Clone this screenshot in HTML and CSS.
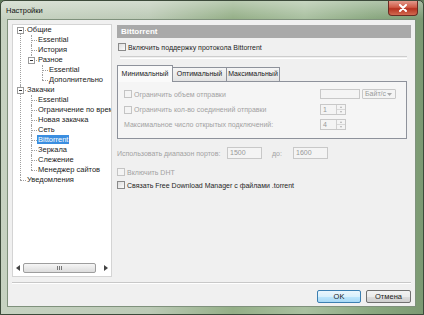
FILE: index.html
```html
<!DOCTYPE html>
<html lang="ru">
<head>
<meta charset="utf-8">
<title>Настройки</title>
<link rel="stylesheet" href="styles.css">
</head>
<body>
<div class="window">
  <div class="titlebar">
    <span class="title">Настройки</span>
    <span class="close"><svg width="10" height="8" viewBox="0 0 10 8"><path d="M2 1 L8 7 M8 1 L2 7" stroke="#fff" stroke-width="2" stroke-linecap="round"/></svg></span>
  </div>
  <div class="client">
    <div class="main">
      <div class="tree">
        <ul class="root">
          <li><span class="exp"></span>Общие
            <ul>
              <li>Essential</li>
              <li>История</li>
              <li><span class="exp"></span>Разное
                <ul>
                  <li>Essential</li>
                  <li>Дополнительно</li>
                </ul>
              </li>
            </ul>
          </li>
          <li><span class="exp"></span>Закачки
            <ul>
              <li>Essential</li>
              <li><span class="clip">Ограничение по времени</span></li>
              <li>Новая закачка</li>
              <li>Сеть</li>
              <li><span class="sel">Bittorrent</span></li>
              <li>Зеркала</li>
              <li>Слежение</li>
              <li>Менеджер сайтов</li>
            </ul>
          </li>
          <li>Уведомления</li>
        </ul>
        <div class="hscroll">
          <span class="sb-btn"><svg width="4" height="6" viewBox="0 0 4 6"><path d="M4 0 L0 3 L4 6Z" fill="#444"/></svg></span>
          <span class="sb-track"><span class="sb-thumb"><span class="grip"></span></span></span>
          <span class="sb-btn"><svg width="4" height="6" viewBox="0 0 4 6"><path d="M0 0 L4 3 L0 6Z" fill="#444"/></svg></span>
        </div>
      </div>
      <div class="panel">
        <div class="header">Bittorrent</div>
        <label class="row enabled first"><span class="cb"></span>Включить поддержку протокола Bittorrent</label>
        <div class="groove"></div>
        <div class="tabs">
          <span class="tab active">Минимальный</span>
          <span class="tab">Оптимальный</span>
          <span class="tab">Максимальный</span>
        </div>
        <div class="tabpage">
          <div class="trow r1">
            <label class="row"><span class="cb dis"></span>Ограничить объем отправки</label>
            <div class="ctrls"><span class="edit w40"></span><span class="combo">Байт/с<svg width="5" height="3" viewBox="0 0 5 3"><path d="M0 0 L5 0 L2.5 3Z" fill="#aaa"/></svg></span></div>
          </div>
          <div class="trow r2">
            <label class="row"><span class="cb dis"></span>Ограничить кол-во соединений отправки</label>
            <div class="ctrls"><span class="spin"><span class="spin-val">1</span><span class="spin-btns"><span class="up"></span><span class="down"></span></span></span></div>
          </div>
          <div class="trow r3">
            <span class="row">Максимальное число открытых подключений:</span>
            <div class="ctrls"><span class="spin"><span class="spin-val">4</span><span class="spin-btns"><span class="up"></span><span class="down"></span></span></span></div>
          </div>
        </div>
        <div class="ports">
          <span class="plabel">Использовать диапазон портов:</span>
          <span class="edit port">1500</span>
          <span class="to">до:</span>
          <span class="edit port">1600</span>
        </div>
        <label class="row dht"><span class="cb dis"></span>Включить DHT</label>
        <label class="row enabled assoc"><span class="cb"></span>Связать Free Download Manager с файлами .torrent</label>
      </div>
    </div>
    <div class="sep"></div>
    <div class="buttons">
      <span class="btn default">OK</span>
      <span class="btn">Отмена</span>
    </div>
  </div>
</div>
</body>
</html>
```
FILE: styles.css
```css
html, body {
  margin: 0;
  padding: 0;
  width: 424px;
  height: 315px;
  overflow: hidden;
  background: #5f7a5a;
  font-family: "Liberation Sans", Arial, sans-serif;
}
.window {
  box-sizing: border-box;
  width: 424px;
  height: 315px;
  border: 1px solid #3c4a3a;
  border-radius: 5px 5px 0 0;
  display: flex;
  flex-direction: column;
  background:
    linear-gradient(to bottom, rgba(255,255,255,0.35) 0, rgba(255,255,255,0) 18px),
    linear-gradient(to right, #c6d2c1 0%, #bccab6 35%, #94af87 55%, #a9c0a0 72%, #8aa880 88%, #7c9a73 100%);
}
.titlebar {
  height: 18px;
  display: flex;
  justify-content: space-between;
  align-items: flex-start;
  padding-left: 5px;
}
.title {
  font-size: 7.5px;
  color: #111;
  line-height: 19px;
}
.close {
  width: 30px;
  height: 15px;
  margin-right: 5px;
  box-sizing: border-box;
  border: 1px solid #6b2a22;
  border-top: none;
  border-radius: 0 0 4px 4px;
  background: linear-gradient(to bottom, #e39a8c 0%, #cf5a46 45%, #b53220 55%, #d26a50 100%);
  display: flex;
  align-items: center;
  justify-content: center;
}
.client {
  flex: 1;
  margin: 0 7px 7px 6px;
  background: #f0f0f0;
  border: 1px solid #7f917c;
  display: flex;
  flex-direction: column;
  padding: 4px 4px 0 4px;
}
.main {
  height: 253px;
  display: flex;
}
.tree {
  box-sizing: border-box;
  width: 100px;
  background: #fff;
  border: 1px solid #d4d4d4;
  display: flex;
  flex-direction: column;
  font-size: 7.5px;
  color: #222;
  overflow: hidden;
}
.tree ul {
  list-style: none;
  margin: 0;
  padding: 0;
}
.tree .root { flex: 1; }
.tree ul ul { margin-left: -3px; }
.tree li {
  position: relative;
  padding-left: 14px;
  line-height: 10px;
  white-space: nowrap;
}
.tree .clip {
  display: inline-block;
  max-width: 74px;
  overflow: hidden;
  vertical-align: top;
}
.tree li::before {
  content: "";
  position: absolute;
  left: 7px;
  top: 5px;
  width: 6px;
  border-top: 1px dotted #a0a0a0;
}
.tree li::after {
  content: "";
  position: absolute;
  left: 7px;
  top: 0;
  bottom: 0;
  border-left: 1px dotted #a0a0a0;
}
.tree li:last-child::after {
  bottom: auto;
  height: 5px;
}
.tree .root > li:first-child::after { top: 5px; }
.tree .exp {
  position: absolute;
  left: 4px;
  top: 2px;
  width: 5px;
  height: 5px;
  border: 1px solid #9a9a9a;
  background: #fff;
  z-index: 1;
}
.tree .exp::after {
  content: "";
  position: absolute;
  left: 1px;
  top: 2px;
  width: 3px;
  height: 1px;
  background: #333;
}
.tree .sel {
  background: #3b8ee0;
  color: #fff;
  padding: 0 1px;
  margin-left: -1px;
}
.hscroll {
  height: 10px;
  margin-bottom: 3px;
  display: flex;
  align-items: center;
}
.sb-btn {
  width: 10px;
  display: flex;
  justify-content: center;
}
.sb-track {
  flex: 1;
  height: 10px;
  display: flex;
}
.sb-thumb {
  width: 73px;
  box-sizing: border-box;
  border: 1px solid #9d9d9d;
  border-radius: 2px;
  background: linear-gradient(to bottom, #f6f6f6, #dcdcdc);
  display: flex;
  align-items: center;
  justify-content: center;
}
.grip {
  width: 5px;
  height: 4px;
  background: repeating-linear-gradient(to right, #777 0 1px, transparent 1px 2px);
}
.panel {
  flex: 1;
  margin-left: 5px;
  display: flex;
  flex-direction: column;
  font-size: 7px;
  color: #a2a2a2;
}
.header {
  margin-top: 1px;
  height: 13px;
  line-height: 13px;
  background: #a9a9a9;
  color: #fff;
  font-size: 8px;
  font-weight: bold;
  padding-left: 4px;
}
.row {
  display: flex;
  align-items: center;
  height: 10px;
  white-space: nowrap;
}
.row.enabled { color: #1e1e1e; }
.cb {
  box-sizing: border-box;
  width: 8px;
  height: 8px;
  margin-right: 2px;
  border: 1px solid #8a8a8a;
  background: linear-gradient(135deg, #dcdcdc, #fbfbfb);
  flex: none;
}
.cb.dis {
  border-color: #c4c4c4;
  background: #f4f4f4;
}
.first { margin-top: 4px; margin-left: 1px; }
.groove {
  margin: 4px 4px 0 3px;
  height: 1px;
  border-top: 1px solid #cdcdcd;
  border-bottom: 1px solid #fff;
}
.tabs {
  margin-top: 6px;
  display: flex;
  align-items: flex-end;
  height: 16px;
  position: relative;
  z-index: 1;
}
.tab {
  box-sizing: border-box;
  height: 14px;
  line-height: 12px;
  border: 1px solid #8e929b;
  border-bottom: none;
  margin-right: -1px;
  background: linear-gradient(to bottom, #f5f5f5, #e3e3e3);
  color: #1a1a1a;
  font-size: 7px;
  white-space: nowrap;
  text-align: center;
}
.tab.active {
  height: 17px;
  line-height: 15px;
  width: 56px;
  background: #fafafa;
  margin-bottom: -1px;
}
.tab:nth-child(2) { width: 55px; }
.tab:nth-child(3) { width: 54px; }
.tabpage {
  box-sizing: border-box;
  height: 58px;
  margin-right: 4px;
  border: 1px solid #8e929b;
  background: #f5f5f5;
  padding: 7px 10px 0 6px;
}
.trow {
  display: flex;
  justify-content: space-between;
  align-items: center;
}
.trow.r2 { margin-top: 5px; }
.trow.r3 { margin-top: 4px; }
.trow.r1 { height: 10px; }
.trow.r2, .trow.r3 { height: 11px; }
.ctrls {
  width: 76px;
  display: flex;
  gap: 2px;
}
.edit {
  box-sizing: border-box;
  height: 10px;
  border: 1px solid #c8c8c8;
  background: #f4f4f4;
  color: #999;
  font-size: 7px;
  line-height: 9px;
  padding-left: 2px;
}
.w40 { width: 40px; }
.combo {
  box-sizing: border-box;
  width: 34px;
  height: 10px;
  border: 1px solid #c8c8c8;
  border-radius: 1px;
  background: #f4f4f4;
  color: #9a9a9a;
  font-size: 7px;
  line-height: 8px;
  padding-left: 2px;
  display: flex;
  justify-content: space-between;
  align-items: center;
  padding-right: 3px;
}
.spin {
  box-sizing: border-box;
  width: 26px;
  height: 11px;
  display: flex;
  border: 1px solid #c8c8c8;
  background: #f4f4f4;
}
.spin-val {
  flex: 1;
  font-size: 7px;
  line-height: 9px;
  padding-left: 2px;
  color: #999;
}
.spin-btns {
  width: 8px;
  display: flex;
  flex-direction: column;
  border-left: 1px solid #d0d0d0;
}
.spin-btns span {
  flex: 1;
  display: flex;
  align-items: center;
  justify-content: center;
}
.spin-btns .up { border-bottom: 1px solid #d8d8d8; }
.spin-btns .up::after {
  content: "";
  border-left: 1.5px solid transparent;
  border-right: 1.5px solid transparent;
  border-bottom: 2px solid #b0b0b0;
}
.spin-btns .down::after {
  content: "";
  border-left: 1.5px solid transparent;
  border-right: 1.5px solid transparent;
  border-top: 2px solid #b0b0b0;
}
.ports {
  margin-top: 8px;
  height: 12px;
  display: flex;
  align-items: center;
  white-space: nowrap;
}
.plabel { width: 110px; }
.edit.port {
  width: 35px;
  height: 12px;
  line-height: 10px;
}
.to { width: 31px; padding-left: 10px; box-sizing: border-box; }
.dht { margin-top: 8px; }
.assoc { margin-top: 3px; }
.sep {
  margin-top: 5px;
  height: 0;
  border-top: 1px solid #c8c8c8;
  border-bottom: 1px solid #fff;
}
.buttons {
  margin-top: 6px;
  display: flex;
  justify-content: flex-end;
  gap: 5px;
}
.btn {
  box-sizing: border-box;
  width: 45px;
  height: 13px;
  border: 1px solid #707070;
  border-radius: 2px;
  background: linear-gradient(to bottom, #f2f2f2 0%, #ebebeb 50%, #dddddd 51%, #cfcfcf 100%);
  font-size: 7.5px;
  color: #1a1a1a;
  display: flex;
  align-items: center;
  justify-content: center;
}
.btn.default {
  width: 44px;
  border-color: #3c7fb1;
  background: linear-gradient(to bottom, #eaf6fd 0%, #d9f0fc 50%, #bee6fd 51%, #a7d9f5 100%);
}
```
